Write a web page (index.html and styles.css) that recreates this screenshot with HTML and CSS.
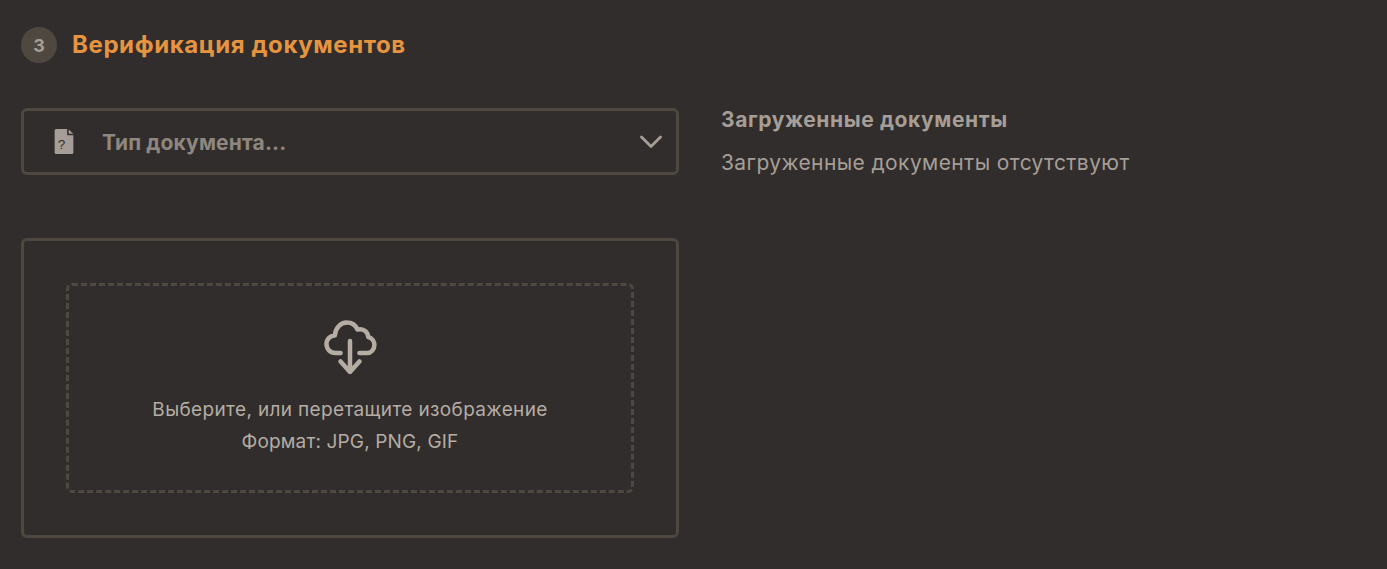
FILE: index.html
```html
<!DOCTYPE html>
<html lang="ru">
<head>
<meta charset="utf-8">
<title>Верификация документов</title>
<link rel="stylesheet" href="styles.css">
</head>
<body>
<main class="page">
  <header class="head">
    <span class="step">3</span>
    <h2 class="title">Верификация документов</h2>
  </header>
  <div class="cols">
    <section class="left">
      <div class="select">
        <svg class="doc" viewBox="0 0 18 24" width="20" height="25" aria-hidden="true">
          <path fill="#a69e96" d="M1.500 0H12L12 6H18V22.500A1.500 1.500 0 0 1 16.500 24H1.500A1.500 1.500 0 0 1 0 22.500V1.500A1.500 1.500 0 0 1 1.500 0z"/>
          <path fill="#a69e96" d="M13.500 0.500 18 4.500H13.500z"/>
          <text class="q" x="6.500" y="19.500" text-anchor="middle">?</text>
        </svg>
        <span class="select-text">Тип документа...</span>
        <svg class="chev" viewBox="0 0 22 14" width="22" height="14" aria-hidden="true">
          <path d="M1.500 2 11 11.500 20.500 2" fill="none" stroke="#a69e96" stroke-width="2.800" stroke-linecap="round" stroke-linejoin="round"/>
        </svg>
      </div>
      <div class="upload">
        <div class="drop">
          <svg class="cloud" viewBox="0 0 54 54" width="54" height="54" aria-hidden="true">
            <path d="M17.600 33H12.400C7.300 33 3.500 29 3.500 24C3.500 19 7.300 15.500 11.800 15.500C12.300 8 17.600 2.500 23.700 2.500C29 2.500 32.800 5.500 34.500 9.500C40.200 8 44.900 12 45.300 17C49.100 18 51.400 21.500 51.400 25C51.400 29.500 48.100 33 44 33H36.400" fill="none" stroke="#b5aca3" stroke-width="4.500" stroke-linecap="round" stroke-linejoin="round"/>
            <path d="M27 21V51M17.600 41.500 27 52 36.400 41.500" fill="none" stroke="#b5aca3" stroke-width="4.500" stroke-linecap="round" stroke-linejoin="round"/>
          </svg>
          <p class="hint">Выберите, или перетащите изображение</p>
          <p class="hint hint-format">Формат: JPG, PNG, GIF</p>
        </div>
      </div>
    </section>
    <aside class="right">
      <h3 class="sub">Загруженные документы</h3>
      <p class="empty">Загруженные документы отсутствуют</p>
    </aside>
  </div>
</main>
</body>
</html>
```
FILE: styles.css
```css
* { box-sizing: border-box; }
html, body { margin: 0; height: 100%; }
body {
  background: #312d2c;
  font-family: Inter, "Open Sans", sans-serif;
  overflow: hidden;
}
.page { padding: 27px 0 0 21px; }
.head { display: flex; align-items: center; gap: 15px; height: 36px; }
.step {
  width: 36px; height: 36px; border-radius: 50%;
  background: #4f4840; color: #a69e96;
  display: flex; align-items: center; justify-content: center;
  font-weight: 700; font-size: 18px;
}
.title { margin: 0; font-size: 24px; letter-spacing: .6px; font-weight: 700; color: #e6943f; line-height: 34px; }
.cols { display: flex; gap: 42px; margin-top: 45px; }
.left { width: 658px; display: flex; flex-direction: column; gap: 63px; }
.select {
  height: 67px; border: 3px solid #4f4840; border-radius: 6px;
  display: flex; align-items: center; padding: 0 14px 0 30px;
}
.doc { flex: none; }
.q { font-size: 13px; fill: #312d2c; font-family: "Liberation Sans", sans-serif; }
.select-text { margin-left: 28px; padding-top: 2px; flex: 1; font-size: 21px; letter-spacing: .15px; font-weight: 700; color: #8f877f; }
.chev { flex: none; }
.upload {
  height: 300px; border: 3px solid #4f4840; border-radius: 6px;
  padding: 42px;
}
.drop {
  height: 210px; border: 3px dashed #4f4840; border-radius: 6px;
  display: flex; flex-direction: column; align-items: center;
  padding-top: 34px;
}
.cloud { margin-bottom: 20px; }
.hint { margin: 0; font-size: 19px; letter-spacing: .35px; line-height: 32px; color: #b5aca3; }
.hint-format { letter-spacing: .15px; }
.sub { margin: 0; padding-top: 1px; font-size: 21px; letter-spacing: .6px; font-weight: 700; color: #a69e96; line-height: 22px; }
.empty { margin: 19px 0 0; font-size: 21px; letter-spacing: .4px; line-height: 26px; color: #a69e96; }
```
